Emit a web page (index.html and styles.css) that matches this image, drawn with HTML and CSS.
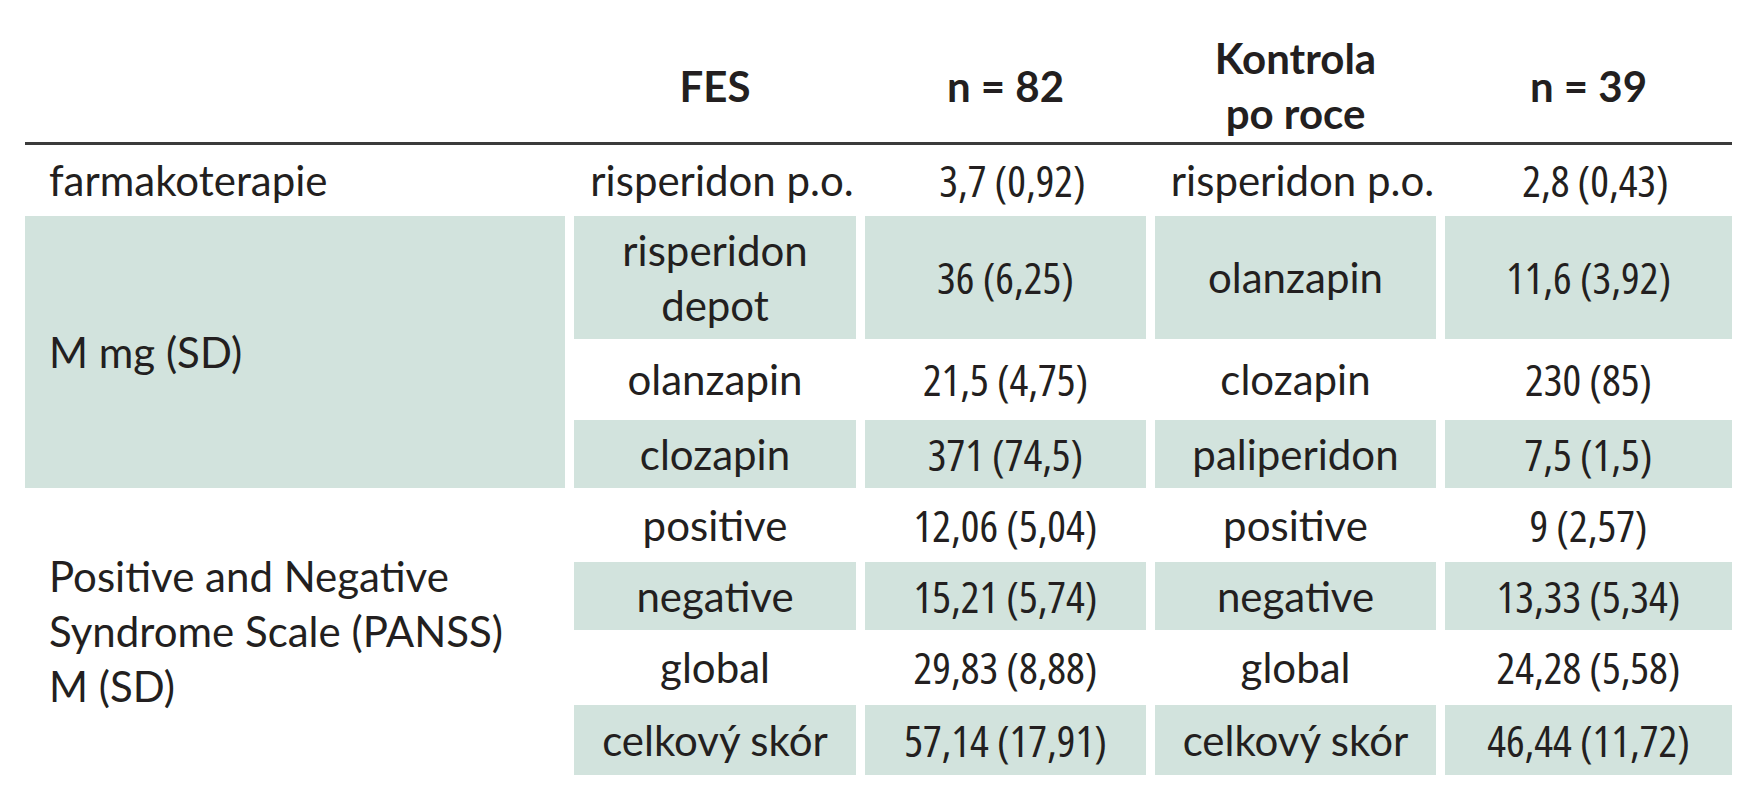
FILE: index.html
```html
<!DOCTYPE html>
<html lang="cs">
<head>
<meta charset="utf-8">
<title>Tabulka</title>
<link rel="stylesheet" href="styles.css">
</head>
<body>
<div class="table">
  <div class="head">
    <div class="hcell"></div>
    <div class="hcell">FES</div>
    <div class="hcell">n = 82</div>
    <div class="hcell">Kontrola<br>po roce</div>
    <div class="hcell">n = 39</div>
  </div>
  <div class="body">
    <div class="cell label">farmakoterapie</div>
    <div class="cell shift">risperidon p.o.</div>
    <div class="cell num shift">3,7 (0,92)</div>
    <div class="cell shift">risperidon p.o.</div>
    <div class="cell num shift">2,8 (0,43)</div>

    <div class="cell label tint span3">M mg (SD)</div>
    <div class="cell tint">risperidon<br>depot</div>
    <div class="cell num tint">36 (6,25)</div>
    <div class="cell tint">olanzapin</div>
    <div class="cell num tint">11,6 (3,92)</div>

    <div class="cell">olanzapin</div>
    <div class="cell num">21,5 (4,75)</div>
    <div class="cell">clozapin</div>
    <div class="cell num">230 (85)</div>

    <div class="cell tint">clozapin</div>
    <div class="cell num tint">371 (74,5)</div>
    <div class="cell tint">paliperidon</div>
    <div class="cell num tint">7,5 (1,5)</div>

    <div class="cell label span4">Positive and Negative<br>Syndrome Scale (PANSS)<br>M (SD)</div>
    <div class="cell">positive</div>
    <div class="cell num">12,06 (5,04)</div>
    <div class="cell">positive</div>
    <div class="cell num">9 (2,57)</div>

    <div class="cell tint">negative</div>
    <div class="cell num tint">15,21 (5,74)</div>
    <div class="cell tint">negative</div>
    <div class="cell num tint">13,33 (5,34)</div>

    <div class="cell">global</div>
    <div class="cell num">29,83 (8,88)</div>
    <div class="cell">global</div>
    <div class="cell num">24,28 (5,58)</div>

    <div class="cell tint">celkový skór</div>
    <div class="cell num tint">57,14 (17,91)</div>
    <div class="cell tint">celkový skór</div>
    <div class="cell num tint">46,44 (11,72)</div>
  </div>
</div>
</body>
</html>
```

FILE: styles.css
```css
html, body {
  margin: 0;
  padding: 0;
  background: #ffffff;
}

body {
  font-family: Lato, "Open Sans", sans-serif;
  font-size: 42px;
  font-weight: 400;
  line-height: 55px;
  color: #231f20;
}

.table {
  width: 1707px;
  margin-left: 25px;
}

.head,
.body {
  display: grid;
  grid-template-columns: 540px 282px 281px 281px 287px;
  column-gap: 9px;
}

.head {
  margin-top: 30px;
  height: 112px;
  border-bottom: 3px solid #3b3b3b;
}

.hcell {
  display: flex;
  align-items: center;
  justify-content: center;
  text-align: center;
  font-size: 42px;
  font-weight: 700;
}

.body {
  grid-template-rows: 71px 123px 81px 68px 74px 68px 75px 70px;
}

.cell {
  display: flex;
  align-items: center;
  justify-content: center;
  text-align: center;
  white-space: nowrap;
}

.cell.num {
  font-family: "Open Sans", Lato, sans-serif;
  font-size: 44px;
  font-stretch: 75%;
}

.cell.label {
  justify-content: flex-start;
  text-align: left;
  padding-left: 24px;
}

.cell.shift {
  padding-left: 14px;
}

.tint {
  background: #d2e3dd;
}

.span3 {
  grid-row: span 3;
}

.span4 {
  grid-row: span 4;
}
```
